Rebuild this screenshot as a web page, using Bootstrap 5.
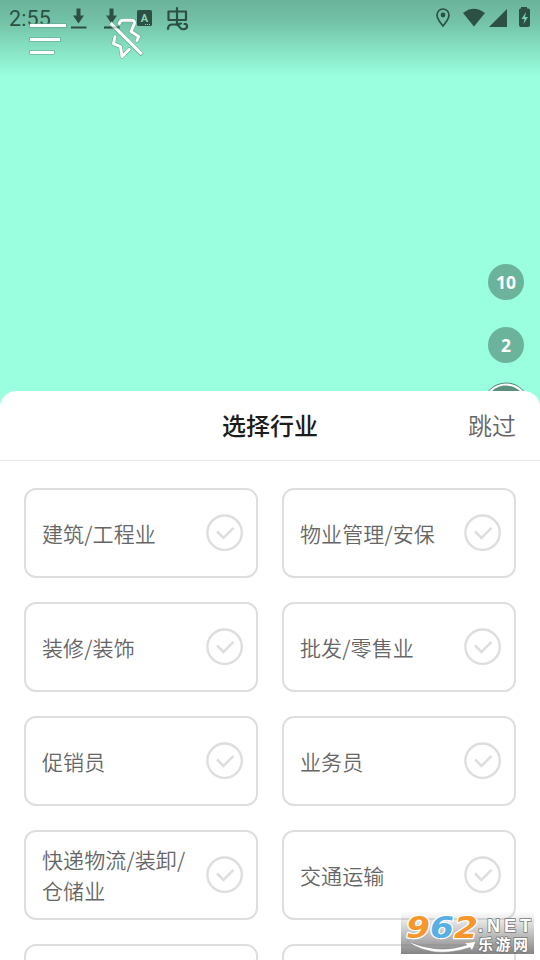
<!DOCTYPE html>
<html lang="zh-CN">
<head>
<meta charset="utf-8">
<meta name="viewport" content="width=device-width, initial-scale=1">
<title>选择行业</title>
<link href="https://cdn.jsdelivr.net/npm/bootstrap@5.3.0/dist/css/bootstrap.min.css" rel="stylesheet">
<style>
body{font-family:"Noto Sans CJK SC",sans-serif;background:#99ffde;height:960px}
.screen{width:540px;height:960px}
.preview{height:391px;margin-bottom:24px;background:linear-gradient(#6bb39b 0,#73c2a7 22px,#83dcbe 44px,#99ffde 76px)}
.statusbar{height:38px;padding:0 10px 0 9px;color:#2c5144}
.clock{font:400 21.500px/38px Roboto,sans-serif;letter-spacing:.1px}
.tools{left:0;top:0}
.zooms{padding:264px 16px 0 0;top:0;right:0;gap:27px}
.zoom-pill{width:36px;height:36px;background:#6bb39b;color:#fff;font:700 17.500px/36px "Open Sans",sans-serif}
.lens{margin:-9px -6px 0}
.sheet{height:593px;margin-top:-24px;border-radius:16px 16px 0 0}
.sheet-head{height:70px;border-bottom:1px solid #e9e9e9;padding:0 24px 2px}
.sheet-title{font-size:24px;line-height:36px;font-weight:500;color:#1c1c1c}
.skip{font-size:24px;line-height:36px;color:#666;font-weight:350}
.choices{padding:27px 24px 0;gap:24px;display:grid;grid-template-columns:234px 234px}
.choice{height:90px;border:2px solid #dedede;border-radius:12px;padding:0 12px 0 16px;font-size:21px;line-height:31px;color:#666;font-weight:350}
.choice svg{flex:none;margin-top:-1px}
.choice span{width:146px;white-space:nowrap;letter-spacing:.1px}
.stamp{left:401px;top:905px}
</style>
<script src="https://cdn.jsdelivr.net/npm/bootstrap@5.3.0/dist/js/bootstrap.bundle.min.js"></script>
</head>
<body>
<svg width="0" height="0" class="position-absolute"><defs>
<g id="tick" fill="none" stroke="#dedede"><circle cx="18.600" cy="18.700" r="17.200" stroke-width="2.400"/><path d="M11 17.500l6.500 6.500L27.500 13.800" stroke-width="2.500"/></g>
<path id="bolt" d="M119.300 23.500q1-3.200 4-3.200h8q4 0 3 3.500l-3.300 7.700 7.700 5-1.700 4M115 36.700l-1.500 7 7 3 1.500 10 7.300-7.400"/>
</defs></svg>
<div class="screen position-relative overflow-hidden">
  <header class="preview position-relative">
    <div class="statusbar d-flex align-items-center justify-content-between">
      <span class="clock">2:55</span>
    </div>
    <svg class="tools position-absolute" width="540" height="76" viewBox="0 0 540 76">
      <g fill="#2c5144">
        <path d="M76.500 8.500h4v7h3.500l-5.500 8-5.500-8h3.500zM71 26.500h15.500v2H71zM109.500 8.500h4v7h3.500l-5.500 8-5.500-8h3.500zM104 26.500h15.500v2H104z"/>
        <rect x="137" y="10" width="15" height="16" rx="1.500"/>
        <path d="M463 13Q473.500 4.500 485 13L474 26.500zM507 9v18h-18zM521 8.500v-1.500h6v1.500h1.500q1.500 0 1.500 1.500v15q0 2-2 2h-7q-2 0-2-2v-15q0-1.500 1.500-1.500z"/>
      </g>
      <text x="144.400" y="22" font-family="Roboto,sans-serif" font-size="11" font-weight="700" text-anchor="middle" fill="#8bd1b8">A</text>
      <path d="M145 24.500h1m1 0h1m1 0h1" stroke="#8bd1b8"/>
      <path d="M526 12l-4.500 7h3l-1 5 4.500-7h-3z" fill="#7bcbb0"/>
      <path d="M168.500 11.500h17.500v8.500h-17.500zM177 8v16M168 29q0-4.500 4.500-4.500h2.500q3.500 0 4.500 2.500 1.500 2.500 4.500 2.200 3.500-.5 3-3.700-.5-2-2.500-1.500M177 24.500l4-1" fill="none" stroke="#2c5144" stroke-width="2.200" stroke-linejoin="round" stroke-linecap="round"/>
      <path d="M443 26c-4-5-6-7-6-11a6 6 0 0 1 12 0c0 4-2 6-6 11z" fill="none" stroke="#2c5144" stroke-width="1.700"/><circle cx="443" cy="15" r="2.400" fill="#2c5144"/>
      <g fill="none" stroke-linejoin="round">
        <g stroke="#5f9f89" stroke-width="4"><path d="M29.500 25.500h37M29.500 39.500h31M29.500 52.500h25"/><use href="#bolt" stroke-linecap="round"/></g>
        <g stroke="#fff" stroke-width="3"><path d="M30 25.500h36M30 39.500h30M30 52.500h24"/><use href="#bolt" stroke-linecap="round"/></g>
        <path d="M110 22.700l32.200 32" stroke="#5f9f89" stroke-width="4.200"/>
        <path d="M110.500 23.200l31.300 31" stroke="#fff" stroke-width="3.200"/>
        <path d="M104 27.500h15.500" stroke="#2c5144" stroke-opacity=".35" stroke-width="2"/>
      </g>
    </svg>
    <div class="zooms position-absolute d-flex flex-column">
      <span class="zoom-pill rounded-circle text-center">10</span>
      <span class="zoom-pill rounded-circle text-center">2</span>
      <svg class="lens" width="48" height="48" viewBox="0 0 48 48"><circle cx="24" cy="25" r="23.500" fill="#598f7c"/><circle cx="24" cy="25" r="21.500" fill="#598f7c" stroke="#fff" stroke-width="2.200"/></svg>
    </div>
  </header>
  <main class="sheet bg-white position-relative">
    <div class="sheet-head d-flex align-items-center justify-content-center position-relative">
      <h1 class="sheet-title m-0">选择行业</h1>
      <span class="skip position-absolute end-0 me-4">跳过</span>
    </div>
    <div class="choices">
      <div class="choice d-flex align-items-center justify-content-between"><span>建筑/工程业</span><svg width="38" height="38"><use href="#tick"/></svg></div>
      <div class="choice d-flex align-items-center justify-content-between"><span>物业管理/安保</span><svg width="38" height="38"><use href="#tick"/></svg></div>
      <div class="choice d-flex align-items-center justify-content-between"><span>装修/装饰</span><svg width="38" height="38"><use href="#tick"/></svg></div>
      <div class="choice d-flex align-items-center justify-content-between"><span>批发/零售业</span><svg width="38" height="38"><use href="#tick"/></svg></div>
      <div class="choice d-flex align-items-center justify-content-between"><span>促销员</span><svg width="38" height="38"><use href="#tick"/></svg></div>
      <div class="choice d-flex align-items-center justify-content-between"><span>业务员</span><svg width="38" height="38"><use href="#tick"/></svg></div>
      <div class="choice d-flex align-items-center justify-content-between"><span>快递物流/装卸/<br>仓储业</span><svg width="38" height="38"><use href="#tick"/></svg></div>
      <div class="choice d-flex align-items-center justify-content-between"><span>交通运输</span><svg width="38" height="38"><use href="#tick"/></svg></div>
      <div class="choice"></div>
      <div class="choice"></div>
    </div>
  </main>
  <svg class="stamp position-absolute overflow-visible" width="133" height="55" viewBox="0 -6 133 55">
    <defs><linearGradient id="haze" x2="0" y2="1"><stop stop-color="#999" stop-opacity="0"/><stop offset=".5" stop-color="#888" stop-opacity=".5"/><stop offset="1" stop-color="#777" stop-opacity=".9"/></linearGradient></defs>
    <rect width="133" height="43" fill="url(#haze)"/>
    <path d="M6 30q32 14 60 4l-3-2 12-1.500-4 9-2-3q-38 12-63-6.500z" fill="#fff" stroke="#888" stroke-width=".5"/>
    <g font-family="DejaVu Sans,sans-serif" font-weight="700" font-style="italic" font-size="31" stroke="#fff" stroke-width="2.500" paint-order="stroke" stroke-linejoin="round">
      <text x="5" y="26.500" textLength="72" lengthAdjust="spacingAndGlyphs"><tspan fill="#f7962c">9</tspan><tspan fill="#58afe4">6</tspan><tspan fill="#f7962c">2</tspan></text>
    </g>
    <g fill="#fff" stroke="#777" stroke-width="1.500" paint-order="stroke" font-weight="700">
      <text x="77" y="21" font-family="Liberation Sans,sans-serif" font-size="18" textLength="53" lengthAdjust="spacing">.NET</text>
      <text x="77" y="38.500" font-family="Noto Sans CJK SC,sans-serif" font-size="15" textLength="50">乐游网</text>
    </g>
  </svg>
</div>
</body>
</html>
